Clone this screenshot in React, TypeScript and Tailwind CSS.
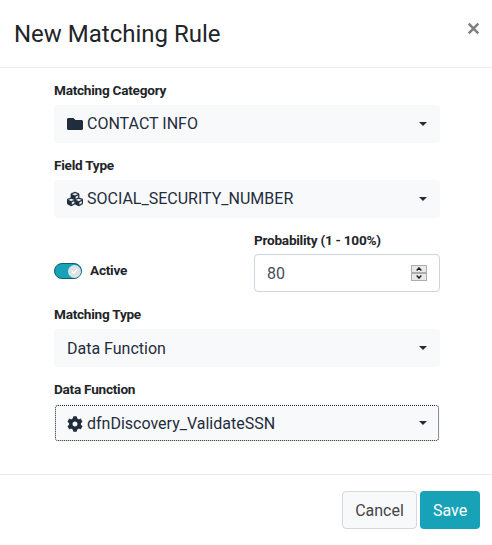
import type { ReactNode } from "react";
import { FaCog, FaCubes, FaFolder } from "react-icons/fa";

function Label({ children, low = false }: { children: ReactNode; low?: boolean }) {
  return (
    <div
      className={`mb-1 h-5 text-[13.6px] font-bold tracking-[-0.25px] whitespace-nowrap text-[#212529] ${
        low ? "leading-5" : "leading-[18px]"
      }`}
    >
      {children}
    </div>
  );
}

type SelectProps = { icon?: ReactNode; text: string; lowered?: boolean; focused?: boolean };

function Select({ icon, text, lowered = false, focused = false }: SelectProps) {
  return (
    <button
      className={`flex h-[38px] w-full items-center rounded bg-[#f8f9fa] px-[13px] text-left text-[#1f2d3d] ${
        focused ? "outline-1 -outline-offset-2 outline-dotted outline-[#212529]" : ""
      }`}
    >
      <span className={`flex grow items-center ${lowered ? "pt-0.5" : ""}`}>
        {icon && <span className="mr-1 flex w-4 justify-center">{icon}</span>}
        <span className="text-base leading-6">{text}</span>
      </span>
      <svg width="8" height="4" viewBox="0 0 8 4" className="fill-[#1f2d3d]">
        <path d="M0 0h8L4 4z" />
      </svg>
    </button>
  );
}

function Switch() {
  return (
    <span className="flex h-4 w-7 items-center justify-end rounded-full border border-[#0c5f6b] bg-[#17a2b8]">
      <span className="flex size-[13px] items-center justify-center rounded-full bg-[#dee2e6]">
        <svg width="7" height="7" viewBox="0 0 8 8" fill="none" stroke="#fff" strokeWidth="1.5">
          <path d="M1 4l2 2 4-4.5" />
        </svg>
      </span>
    </span>
  );
}

function Stepper() {
  return (
    <span className="flex h-4 w-4 flex-col">
      <span className="flex h-2 w-4 items-center justify-center border border-[#adadad] bg-[#e9e9e9]">
        <svg width="6" height="4" viewBox="0 0 6 4" fill="none" stroke="#222" strokeWidth="1.5">
          <path d="M.7 3.5L3 1l2.3 2.5" />
        </svg>
      </span>
      <span className="flex h-2 w-4 items-center justify-center border border-[#adadad] bg-[#e9e9e9]">
        <svg width="6" height="4" viewBox="0 0 6 4" fill="none" stroke="#222" strokeWidth="1.5">
          <path d="M.7 .5L3 3 5.3 .5" />
        </svg>
      </span>
    </span>
  );
}

export default function App() {
  return (
    <div className="flex h-[545px] w-[492px] flex-col overflow-hidden bg-white font-[Roboto,sans-serif] text-[#212529]">
      <header className="flex h-[68px] shrink-0 items-center justify-between border-b border-[#e9ecef] pr-3 pl-[14px]">
        <h1 className="pt-px text-2xl leading-9">New Matching Rule</h1>
        <button aria-label="Close" className="mb-[10px]">
          <svg width="13" height="13" viewBox="0 0 13 13" stroke="#7f7f7f" strokeWidth="2.5">
            <path d="M1.7 1.7l9.6 9.6M11.3 1.7l-9.6 9.6" />
          </svg>
        </button>
      </header>

      <main className="h-[406px] shrink-0 pt-[13px] pr-[52px] pl-[54px]">
        <div className="mb-[13px]">
          <Label>Matching Category</Label>
          <Select icon={<FaFolder size={16} />} text="CONTACT INFO" />
        </div>
        <div className="mb-3">
          <Label>Field Type</Label>
          <Select icon={<FaCubes size={16} stroke="currentColor" strokeWidth={8} />} text="SOCIAL_SECURITY_NUMBER" />
        </div>
        <div className="mb-[13px] flex justify-between">
          <div className="flex items-center gap-2 pt-[20px]">
            <Switch />
            <span className="pb-0.5 text-[13.6px] leading-[18px] font-bold tracking-[-0.25px]">Active</span>
          </div>
          <div className="w-[186px]">
            <Label low>Probability (1 - 100%)</Label>
            <div className="flex h-[38px] items-center justify-between rounded border border-[#ced4da] px-3 text-base text-[#495057]">
              <span className="pt-0.5">80</span>
              <Stepper />
            </div>
          </div>
        </div>
        <div className="mb-[13px]">
          <Label>Matching Type</Label>
          <Select text="Data Function" lowered />
        </div>
        <div>
          <Label>Data Function</Label>
          <Select icon={<FaCog size={16} />} text="dfnDiscovery_ValidateSSN" lowered focused />
        </div>
      </main>

      <footer className="flex grow items-start justify-end gap-[3px] border-t border-[#e9ecef] pt-4 pr-3">
        <button className="h-[38px] w-[75px] rounded border border-[#d5d8dc] bg-[#f8f9fa] pt-0.5 text-base text-[#444]">
          Cancel
        </button>
        <button className="h-[38px] w-[60px] rounded bg-[#17a2b8] pt-0.5 text-base text-white">Save</button>
      </footer>
    </div>
  );
}
